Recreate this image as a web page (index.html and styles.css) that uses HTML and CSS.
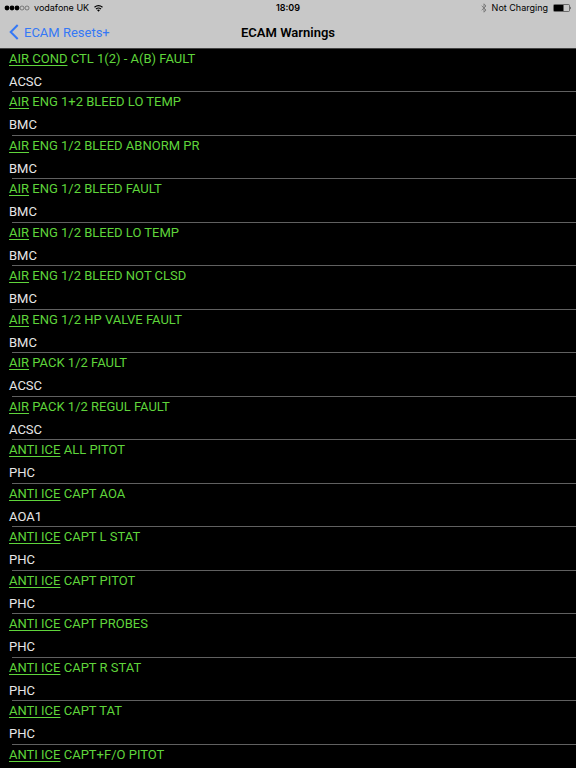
FILE: index.html
```
<!DOCTYPE html>
<html lang="en">
<head>
	<meta charset="utf-8">
	<meta name="viewport" content="width=device-width, initial-scale=1">
	<title>ECAM Warnings</title>
	<link rel="stylesheet" href="styles.css">
</head>
<body>

<header class="top">
	<div class="status">
		<div class="carrier">
			<svg class="signal" width="26" height="6" viewBox="0 0 26 6">
				<circle cx="3" cy="3" r="2.4"/>
				<circle cx="8" cy="3" r="2.4"/>
				<circle cx="13" cy="3" r="2.4"/>
				<circle class="off" cx="18" cy="3" r="2"/>
				<circle class="off" cx="23" cy="3" r="2"/>
			</svg>
			<span>vodafone UK</span>
			<svg class="wifi" width="9" height="7" viewBox="0 0 9 7">
				<path d="M0.5 2.3Q4.5 -1 8.5 2.3M2 4Q4.5 2 7 4"/>
				<path class="fan" d="M3 5.1Q4.5 4 6 5.1L4.5 6.8z"/>
			</svg>
		</div>
		<time class="clock">18:09</time>
		<div class="power">
			<svg class="bluetooth" width="6" height="10" viewBox="0 0 6 10">
				<path d="M0.7 2.8L5 7L3 9.2V0.8L5 3L0.7 7.2"/>
			</svg>
			<span>Not Charging</span>
			<svg class="battery" width="19" height="8" viewBox="0 0 19 8">
				<rect class="shell" x="0.5" y="0.5" width="16" height="7" rx="1"/>
				<rect x="1" y="1" width="9.5" height="6"/>
				<path d="M17.3 2.6Q18.6 4 17.3 5.4z"/>
			</svg>
		</div>
	</div>
	<nav class="bar">
		<a class="back" href="#">
			<svg width="10" height="16" viewBox="0 0 10 16"><path d="M8.7 1L1.7 8l7 7"/></svg>
			ECAM Resets+
		</a>
		<h1>ECAM Warnings</h1>
	</nav>
</header>

<ul class="warnings">
	<li><p class="title"><u>AIR COND</u> CTL 1(2) - A(B) FAULT</p><p class="reset">ACSC</p></li>
	<li><p class="title"><u>AIR</u> ENG 1+2 BLEED LO TEMP</p><p class="reset">BMC</p></li>
	<li><p class="title"><u>AIR</u> ENG 1/2 BLEED ABNORM PR</p><p class="reset">BMC</p></li>
	<li><p class="title"><u>AIR</u> ENG 1/2 BLEED FAULT</p><p class="reset">BMC</p></li>
	<li><p class="title"><u>AIR</u> ENG 1/2 BLEED LO TEMP</p><p class="reset">BMC</p></li>
	<li><p class="title"><u>AIR</u> ENG 1/2 BLEED NOT CLSD</p><p class="reset">BMC</p></li>
	<li><p class="title"><u>AIR</u> ENG 1/2 HP VALVE FAULT</p><p class="reset">BMC</p></li>
	<li><p class="title"><u>AIR</u> PACK 1/2 FAULT</p><p class="reset">ACSC</p></li>
	<li><p class="title"><u>AIR</u> PACK 1/2 REGUL FAULT</p><p class="reset">ACSC</p></li>
	<li><p class="title"><u>ANTI ICE</u> ALL PITOT</p><p class="reset">PHC</p></li>
	<li><p class="title"><u>ANTI ICE</u> CAPT AOA</p><p class="reset">AOA1</p></li>
	<li><p class="title"><u>ANTI ICE</u> CAPT L STAT</p><p class="reset">PHC</p></li>
	<li><p class="title"><u>ANTI ICE</u> CAPT PITOT</p><p class="reset">PHC</p></li>
	<li><p class="title"><u>ANTI ICE</u> CAPT PROBES</p><p class="reset">PHC</p></li>
	<li><p class="title"><u>ANTI ICE</u> CAPT R STAT</p><p class="reset">PHC</p></li>
	<li><p class="title"><u>ANTI ICE</u> CAPT TAT</p><p class="reset">PHC</p></li>
	<li><p class="title"><u>ANTI ICE</u> CAPT+F/O PITOT</p></li>
</ul>

</body>
</html>
```
FILE: styles.css
```
body {
	margin: 0;
	background: black;
	color: #e6e6e6;
	font-family: Roboto, "Liberation Sans", sans-serif;
	font-size: 13px;
}
h1, p, ul {
	margin: 0;
	padding: 0;
}

.top {
	background: #c8c8c8;
	color: black;
	border-bottom: 1px solid #444;
}
.status, .bar {
	display: grid;
	grid-template-columns: 1fr auto 1fr;
	align-items: center;
}

.status {
	height: 16px;
	padding: 0 4px;
	font-family: Inter, "Liberation Sans", sans-serif;
	font-size: 9px;
	line-height: 16px;
}
.carrier, .power {
	display: flex;
	align-items: center;
}
.carrier {
	gap: 4px;
}
.carrier span {
	margin-right: 1px;
}
.power {
	gap: 5px;
	justify-content: flex-end;
}
.clock {
	font-weight: 600;
}
.signal .off {
	fill: none;
	stroke: #444;
	stroke-width: 0.6;
}
.wifi path {
	fill: none;
	stroke: black;
	stroke-width: 1.2;
}
.wifi .fan {
	fill: black;
	stroke: none;
}
.bluetooth path {
	fill: none;
	stroke: #777;
	stroke-width: 0.9;
}
.battery .shell {
	fill: none;
	stroke: #444;
	stroke-width: 0.7;
}

.bar {
	height: 32px;
	padding: 0 9px;
}
.bar h1 {
	grid-column: 2;
	font-size: 13px;
	font-weight: 600;
}
.back {
	display: flex;
	align-items: center;
	gap: 5px;
	color: #3478f6;
	text-decoration: none;
}
.back path {
	fill: none;
	stroke: #3478f6;
	stroke-width: 2;
}

.warnings {
	list-style: none;
}
/* rows alternate so that two of them take 87px */
.warnings li {
	box-sizing: border-box;
	height: 43px;
	margin-left: 12px;
	border-bottom: 1px solid #606060;
}
.warnings li:nth-child(even) {
	height: 44px;
}
.warnings li:last-child {
	height: auto;
	border-bottom: 0;
}
.warnings p {
	margin-left: -3px;
}
.title {
	color: #5fd53b;
	line-height: 20px;
}
.title u {
	text-decoration-thickness: 1px;
	text-underline-offset: 2px;
	text-decoration-skip-ink: none;
}
.reset {
	padding-top: 3px;
	line-height: 20px;
}
```
